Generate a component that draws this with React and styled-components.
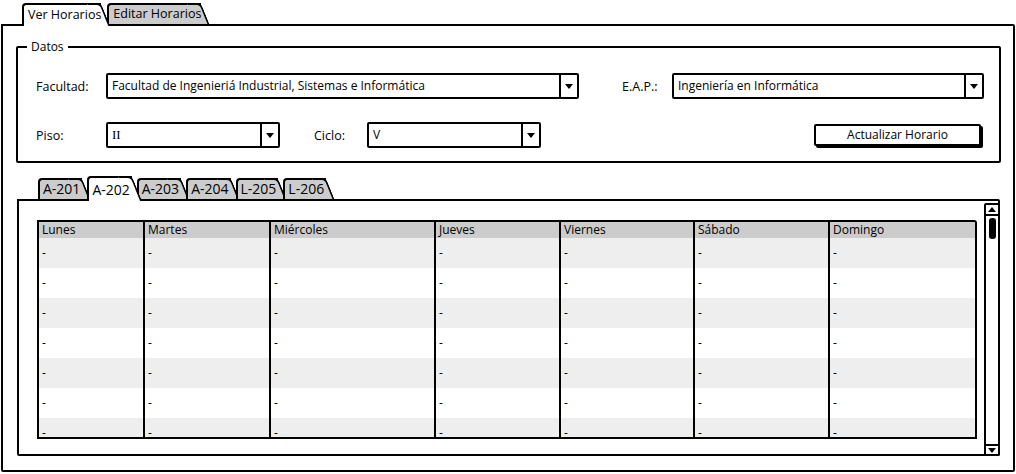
import styled, { createGlobalStyle } from "styled-components";

const GlobalStyle = createGlobalStyle`
  body {
    margin: 0;
    background: #fff;
    font-family: "Open Sans", "DejaVu Sans", sans-serif;
    font-size: 12px;
    color: #000;
  }
`;

const Page = styled.div`
  width: 1016px;
  height: 474px;
  box-sizing: border-box;
  padding: 3px 1px 0 1px;
  overflow: hidden;
`;

const TabStrip = styled.div`
  display: flex;
  align-items: flex-end;
  margin-left: ${(p) => p.$offset}px;
`;

const Tab = styled.div`
  position: relative;
  z-index: ${(p) => (p.$active ? 2 : 1)};
  height: ${(p) => p.$h}px;
  box-sizing: border-box;
  margin-right: ${(p) => p.$gap}px;
  margin-bottom: ${(p) => (p.$active ? -2 : 0)}px;
  padding: ${(p) => p.$pt}px ${(p) => p.$pr || 0}px 0 ${(p) => p.$pl}px;
  background: ${(p) => (p.$active ? "#fff" : "#cccccc")};
  border: 2px solid #000;
  border-right: none;
  border-bottom: none;
  border-top-left-radius: 4px;
  font-size: ${(p) => p.$fs}px;
  line-height: 16px;
  white-space: nowrap;

  &::after {
    content: "";
    position: absolute;
    z-index: -1;
    top: -2px;
    bottom: 0;
    right: 0;
    width: 12px;
    background: inherit;
    border-top: 2px solid #000;
    border-right: 2px solid #000;
    border-top-right-radius: 5px;
    transform: skewX(22deg);
    transform-origin: top;
  }
`;

const MainPanel = styled.div`
  height: 448px;
  box-sizing: border-box;
  border: 2px solid #000;
  border-radius: 0 2px 2px 2px;
`;

const Fieldset = styled.fieldset`
  margin: 13px 12px 0 13px;
  padding: 18px 15px 13px 18px;
  min-width: 0;
  border: 2px solid #000;
  border-radius: 2px;
`;

const Legend = styled.legend`
  margin-left: -9px;
  padding: 0 4px;
  line-height: 16px;
`;

const FormRow = styled.div`
  display: flex;
  align-items: center;
  height: 26px;
  & + & {
    margin-top: 23px;
  }
`;

const Label = styled.span`
  flex: none;
  width: ${(p) => p.$w}px;
  margin-left: ${(p) => p.$ml || 0}px;
  font-size: 12.5px;
`;

const Combo = styled.div`
  flex: none;
  display: flex;
  width: ${(p) => p.$w}px;
  height: 26px;
  box-sizing: border-box;
  border: 2px solid #000;
  border-radius: 2px;
  background: #fff;
`;

const ComboValue = styled.span`
  flex: 1;
  padding-left: 4px;
  line-height: 22px;
  font-family: ${(p) =>
    p.$serif ? '"Liberation Serif", serif' : '"Open Sans", sans-serif'};
  font-size: ${(p) => (p.$serif ? 13 : 12)}px;
`;

const ComboArrow = styled.div`
  flex: none;
  width: 16px;
  border-left: 2px solid #000;
  display: flex;
  align-items: center;
  justify-content: center;
`;

const Button = styled.div`
  flex: none;
  margin-left: auto;
  margin-right: 3px;
  width: 167px;
  height: 22px;
  box-sizing: border-box;
  border: 2px solid #000;
  border-radius: 2px;
  box-shadow: 2px 2px 0 #000;
  background: #fff;
  text-align: center;
  line-height: 18px;
`;

const SubTabs = styled(TabStrip)`
  margin-top: 13px;
`;

const RoomPanel = styled.div`
  display: flex;
  height: 257px;
  margin: 0 13px 0 14px;
  box-sizing: border-box;
  border: 2px solid #000;
  border-radius: 0 2px 2px 2px;
`;

const TableArea = styled.div`
  padding: 19px 0 0 18px;
`;

const Table = styled.div`
  width: 940px;
  height: 219px;
  box-sizing: border-box;
  border: 2px solid #000;
  border-radius: 0 3px 0 0;
  overflow: hidden;
`;

const Row = styled.div`
  display: grid;
  grid-template-columns: 104px 126px 165px 125px 134px 135px 147px;
  height: ${(p) => (p.$head ? 16 : 30)}px;
  line-height: ${(p) => (p.$head ? 16 : 30)}px;
  background: ${(p) => (p.$head ? "#cccccc" : p.$odd ? "#eeeeee" : "#fff")};
`;

const Cell = styled.div`
  padding-left: 3px;
  white-space: nowrap;
  overflow: hidden;
  & + & {
    border-left: 2px solid #000;
  }
`;

const Scrollbar = styled.div`
  flex: none;
  display: flex;
  flex-direction: column;
  width: 16px;
  margin: 2px -2px -2px auto;
  box-sizing: border-box;
  border: 2px solid #000;
  border-radius: 2px;
  background: #fff;
`;

const ScrollButton = styled.div`
  flex: none;
  height: ${(p) => (p.$down ? 8 : 9)}px;
  display: flex;
  align-items: center;
  justify-content: center;
  border-${(p) => (p.$down ? "top" : "bottom")}: 2px solid #000;
  margin-top: ${(p) => (p.$down ? "auto" : "0")};
`;

const Thumb = styled.div`
  flex: none;
  width: 7px;
  height: 21px;
  margin: 2px auto 0;
  background: #000;
  border-radius: 3px;
`;

const Triangle = ({ down = true }) => (
  <svg width="8" height="5" viewBox="0 0 8 5">
    <polygon points={down ? "0,0 8,0 4,5" : "0,5 8,5 4,0"} fill="#000" />
  </svg>
);

function Select({ width, value, serif }) {
  return (
    <Combo $w={width}>
      <ComboValue $serif={serif}>{value}</ComboValue>
      <ComboArrow>
        <Triangle />
      </ComboArrow>
    </Combo>
  );
}

const days = ["Lunes", "Martes", "Miércoles", "Jueves", "Viernes", "Sábado", "Domingo"];
const rooms = ["A-201", "A-202", "A-203", "A-204", "L-205", "L-206"];

export default function App() {
  return (
    <>
      <GlobalStyle />
      <Page>
        <TabStrip $offset={21}>
          <Tab $active $h={23} $gap={6} $pl={4} $pt={2} $fs={12.5}>
            Ver Horarios
          </Tab>
          <Tab $h={21} $gap={6} $pl={4} $pt={1} $fs={12.5}>
            Editar Horarios
          </Tab>
        </TabStrip>
        <MainPanel>
          <Fieldset>
            <Legend>Datos</Legend>
            <FormRow>
              <Label $w={70}>Facultad:</Label>
              <Select
                width={473}
                value="Facultad de Ingenieriá Industrial, Sistemas e Informática"
              />
              <Label $w={50} $ml={43}>
                E.A.P.:
              </Label>
              <Select width={312} value="Ingeniería en Informática" />
            </FormRow>
            <FormRow>
              <Label $w={70}>Piso:</Label>
              <Select width={174} value="II" serif />
              <Label $w={53} $ml={34}>
                Ciclo:
              </Label>
              <Select width={174} value="V" />
              <Button>Actualizar Horario</Button>
            </FormRow>
          </Fieldset>
          <SubTabs $offset={35}>
            {rooms.map((r, i) => (
              <Tab
                key={r}
                $active={i === 1}
                $h={i === 1 ? 25 : 21}
                $gap={5}
                $pl={3}
                $pr={2}
                $pt={i === 1 ? 4 : 1}
                $fs={14}
              >
                {r}
              </Tab>
            ))}
          </SubTabs>
          <RoomPanel>
            <TableArea>
              <Table>
                <Row $head>
                  {days.map((d) => (
                    <Cell key={d}>{d}</Cell>
                  ))}
                </Row>
                {Array.from({ length: 7 }, (_, r) => (
                  <Row key={r} $odd={r % 2 === 0}>
                    {days.map((d) => (
                      <Cell key={d}>-</Cell>
                    ))}
                  </Row>
                ))}
              </Table>
            </TableArea>
            <Scrollbar>
              <ScrollButton>
                <Triangle down={false} />
              </ScrollButton>
              <Thumb />
              <ScrollButton $down>
                <Triangle />
              </ScrollButton>
            </Scrollbar>
          </RoomPanel>
        </MainPanel>
      </Page>
    </>
  );
}
